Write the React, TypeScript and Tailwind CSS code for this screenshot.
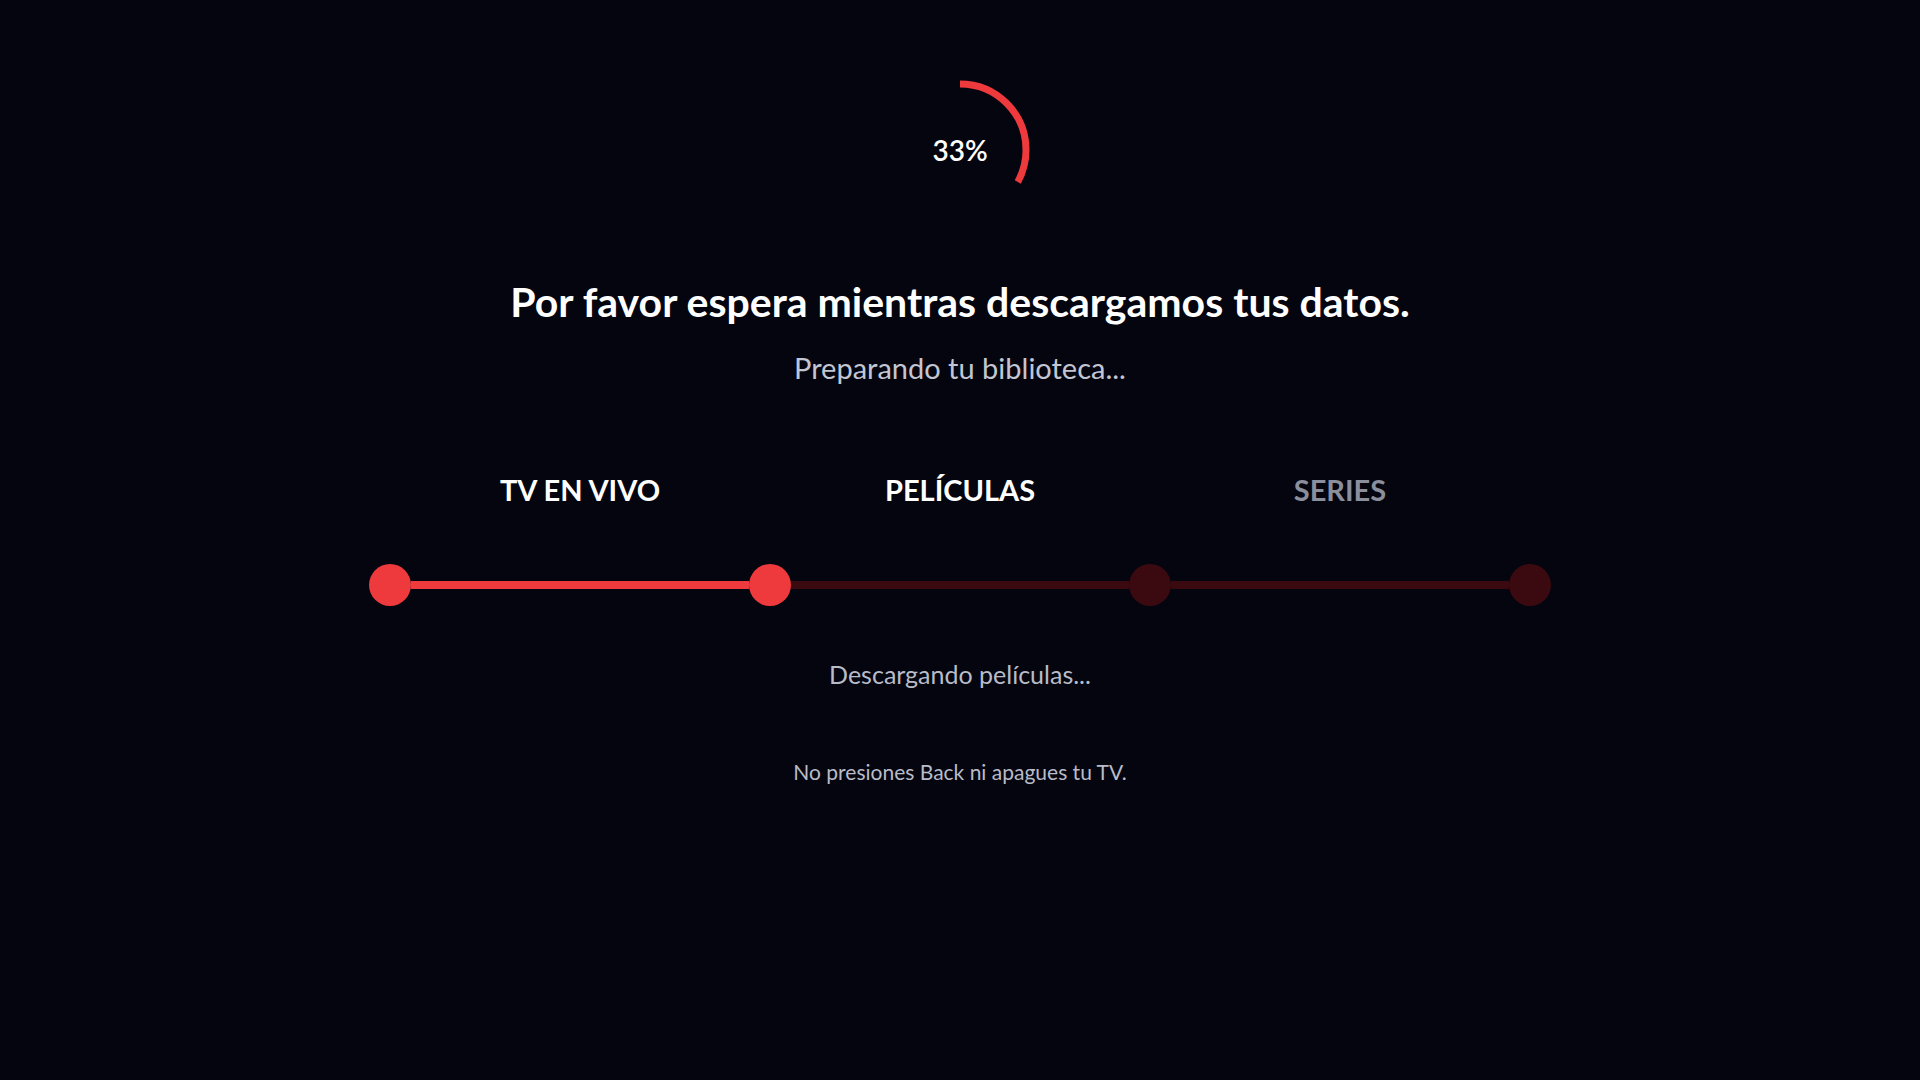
import React from 'react';

const steps = [
  { label: 'TV EN VIVO', state: 'done' },
  { label: 'PELÍCULAS', state: 'active' },
  { label: 'SERIES', state: 'pending' },
];

function ProgressRing({ percent }: { percent: number }) {
  const radius = 66;
  const circumference = 2 * Math.PI * radius;
  const offset = circumference - (percent / 100) * circumference;
  return (
    <div className="relative w-[140px] h-[140px]">
      <svg className="w-[140px] h-[140px] -rotate-90" viewBox="0 0 140 140">
        <circle
          cx="70"
          cy="70"
          r={radius}
          fill="none"
          stroke="#ef3a3d"
          strokeWidth="7"
          strokeDasharray={circumference}
          strokeDashoffset={offset}
        />
      </svg>
      <span className="absolute inset-0 flex items-center justify-center text-[28px] font-semibold text-white">
        {percent}%
      </span>
    </div>
  );
}

export default function App() {
  return (
    <div
      className="w-full min-h-screen bg-[#04050f] flex flex-col items-center pt-[80px]"
      style={{ fontFamily: 'Lato, "Noto Sans", sans-serif' }}
    >
      <ProgressRing percent={33} />

      <h1 className="mt-[58px] text-[41px] leading-[48px] font-bold text-white">
        Por favor espera mientras descargamos tus datos.
      </h1>
      <p className="mt-[25px] text-[29px] leading-[34px] text-[#c3c6d2]">Preparando tu biblioteca...</p>

      {/* Step labels */}
      <div className="mt-[88px] w-[1140px] grid grid-cols-3">
        {steps.map((s) => (
          <div
            key={s.label}
            className={`text-center text-[29px] leading-[34px] font-bold ${
              s.state === 'pending' ? 'text-[#8b8e9c]' : 'text-white'
            }`}
          >
            {s.label}
          </div>
        ))}
      </div>

      {/* Track */}
      <div className="mt-[57px] flex items-center">
        <div className="w-[42px] h-[42px] rounded-full bg-[#ef3a3d]" />
        <div className="w-[338px] h-[8px] bg-[#ef3a3d]" />
        <div className="w-[42px] h-[42px] rounded-full bg-[#ef3a3d]" />
        <div className="w-[338px] h-[8px] bg-[#3a0a10]" />
        <div className="w-[42px] h-[42px] rounded-full bg-[#3a0a10]" />
        <div className="w-[338px] h-[8px] bg-[#3a0a10]" />
        <div className="w-[42px] h-[42px] rounded-full bg-[#3a0a10]" />
      </div>

      <p className="mt-[53px] text-[25px] leading-[30px] text-[#b8bbc8]">Descargando películas...</p>
      <p className="mt-[70px] text-[21px] leading-[26px] text-[#b8bbc8]">No presiones Back ni apagues tu TV.</p>
    </div>
  );
}
